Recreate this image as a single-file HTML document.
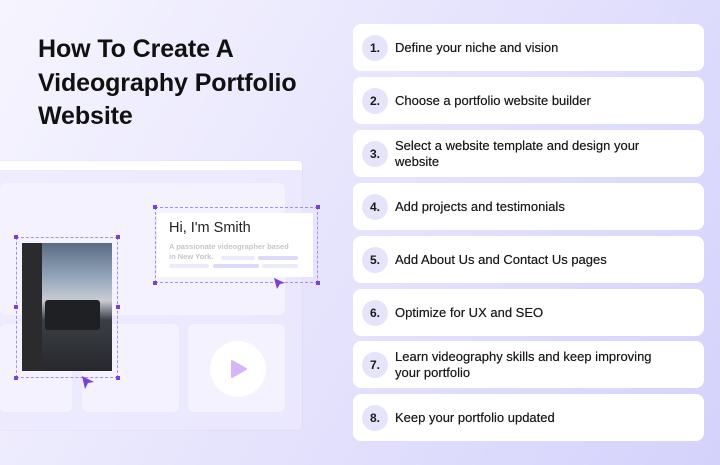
<!DOCTYPE html>
<html><head><style>
*{margin:0;padding:0;box-sizing:border-box}
body{width:720px;height:465px;overflow:hidden;position:relative;font-family:"Liberation Sans",sans-serif;background:linear-gradient(120deg,#f6f5fe 0%,#e9e7fd 40%,#d4d2fb 100%)}
h1{position:absolute;left:38px;top:33px;font-size:25px;line-height:33.5px;font-weight:700;color:#111;letter-spacing:-0.1px}
.card{position:absolute;left:353px;width:351px;height:47px;background:#fff;border-radius:8px;display:flex;align-items:center;font-size:13px;color:#1a1a1c;line-height:16px;text-shadow:0 0 0.4px #1a1a1c}
.num{width:26px;height:26px;border-radius:50%;background:#e6e4fb;margin-left:9px;margin-right:7px;display:flex;align-items:center;justify-content:center;font-weight:700;font-size:12px;flex:none;text-shadow:none}
.frame{position:absolute;left:0;top:161px;width:302px;height:269px;background:rgba(236,234,253,.7);border-radius:0 4px 4px 0;box-shadow:0 0 1px rgba(150,140,220,.4)}
.bar{position:absolute;left:0;top:161px;width:302px;height:9px;background:#fff;border-radius:0 4px 0 0}
.p{position:absolute;background:rgba(244,243,254,.9);border-radius:6px}
.dash{position:absolute;border:1px dashed #a98ee8}
.h{position:absolute;width:4px;height:4px;background:#7b3fe0}
.l{position:absolute;height:4px;border-radius:2px;background:#ecebfb}
</style></head><body>
<h1>How To Create A<br>Videography Portfolio<br>Website</h1>
<div class="frame"></div><div class="bar"></div>
<div class="p" style="left:0;top:183px;width:285px;height:132px"></div>
<div class="p" style="left:0;top:324px;width:72px;height:88px"></div>
<div class="p" style="left:82px;top:324px;width:97px;height:88px"></div>
<div class="p" style="left:188px;top:324px;width:97px;height:88px"></div>
<div style="position:absolute;left:210px;top:341px;width:56px;height:56px;border-radius:50%;background:#fff"></div>
<svg style="position:absolute;left:231px;top:360px" width="16" height="18"><path d="M1 1L15 9L1 17Z" fill="#d7b6f7" stroke="#d7b6f7" stroke-linejoin="round" stroke-width="2"/></svg>
<div style="position:absolute;left:22px;top:243px;width:90px;height:128px;background:linear-gradient(180deg,#5a6c82 0%,#8ea2b8 25%,#c9ccd2 45%,#3c3f45 60%,#26282c 100%)"></div>
<div style="position:absolute;left:22px;top:243px;width:20px;height:128px;background:#2b2b2e"></div>
<div style="position:absolute;left:45px;top:300px;width:55px;height:30px;background:#1f2023;border-radius:3px"></div>
<div class="dash" style="left:16px;top:237px;width:102px;height:141px"></div>
<div class="h" style="left:14px;top:235px"></div><div class="h" style="left:116px;top:235px"></div>
<div class="h" style="left:14px;top:305px"></div><div class="h" style="left:116px;top:305px"></div>
<div class="h" style="left:14px;top:376px"></div><div class="h" style="left:116px;top:376px"></div>
<svg style="position:absolute;left:80px;top:374px" width="16" height="16"><path d="M2 2L14 8L8 9L5 15Z" fill="#7b3fe0"/></svg>
<div style="position:absolute;left:157px;top:213px;width:156px;height:64px;background:#fff"></div>
<div class="dash" style="left:155px;top:207px;width:163px;height:76px"></div>
<div class="h" style="left:153px;top:205px"></div><div class="h" style="left:316px;top:205px"></div>
<div class="h" style="left:153px;top:281px"></div><div class="h" style="left:316px;top:281px"></div>
<div style="position:absolute;left:169px;top:220px;font-size:14.5px;color:#222">Hi, I'm Smith</div>
<div style="position:absolute;left:169px;top:242px;font-size:7.5px;line-height:10px;color:#c6c6cc;font-weight:700;width:140px">A passionate videographer based<br>in New York.</div>
<div class="l" style="left:221px;top:256px;width:34px"></div><div class="l" style="left:258px;top:256px;width:40px;background:#dcd9fa"></div>
<div class="l" style="left:169px;top:264px;width:40px"></div><div class="l" style="left:213px;top:264px;width:46px;background:#dcd9fa"></div><div class="l" style="left:262px;top:264px;width:36px"></div>
<svg style="position:absolute;left:273px;top:277px" width="14" height="14"><path d="M1 1L12 6L7 7L4 12Z" fill="#7b3fe0"/></svg>
<div class="card" style="top:24px"><div class="num">1.</div>Define your niche and vision</div>
<div class="card" style="top:77px"><div class="num">2.</div>Choose a portfolio website builder</div>
<div class="card" style="top:130px"><div class="num">3.</div>Select a website template and design your<br>website</div>
<div class="card" style="top:183px"><div class="num">4.</div>Add projects and testimonials</div>
<div class="card" style="top:236px"><div class="num">5.</div>Add About Us and Contact Us pages</div>
<div class="card" style="top:289px"><div class="num">6.</div>Optimize for UX and SEO</div>
<div class="card" style="top:341px"><div class="num">7.</div>Learn videography skills and keep improving<br>your portfolio</div>
<div class="card" style="top:394px"><div class="num">8.</div>Keep your portfolio updated</div>
</body></html>
